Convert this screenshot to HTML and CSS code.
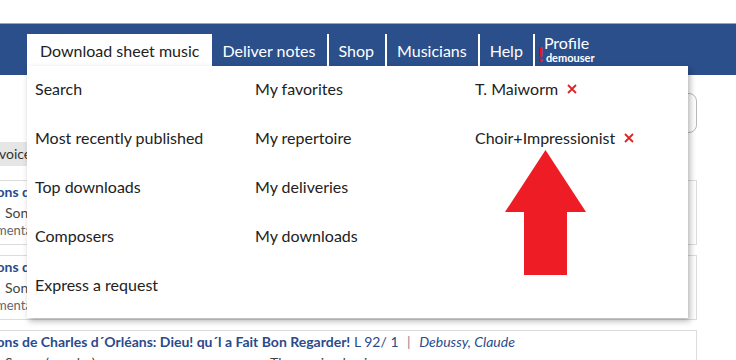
FILE: index.html
```html
<!DOCTYPE html>
<html lang="en">
<head>
<meta charset="utf-8">
<title>Download sheet music</title>
<link rel="stylesheet" href="styles.css">
</head>
<body>
<div class="topspace"></div>
<header class="nav">
  <ul class="tabs">
    <li class="tab active">Download sheet music</li>
    <li class="tab">Deliver notes</li>
    <li class="tab">Shop</li>
    <li class="tab">Musicians</li>
    <li class="tab">Help</li>
    <li class="tab profile"><span class="alert">!</span><span class="pstack"><span class="pname">Profile</span><span class="puser">demouser</span></span></li>
  </ul>
</header>
<main class="content">
  <div class="toolbar">
    <div class="select">
      <span>Relevance</span>
      <svg class="chev" width="12" height="8" viewBox="0 0 12 8"><path d="M1 1 L6 6 L11 1" fill="none" stroke="#444" stroke-width="1.6"/></svg>
    </div>
  </div>
  <div class="filters"><span class="chip">Solo voice</span></div>
  <div class="card">
    <div class="title"><b>Trois Chansons de Charles d´Orléans: Quant j´ai ouy le tabourin</b></div>
    <div class="meta"><span class="genre">Songs (secular)</span><span>Three mixed voices</span></div>
    <div class="instr">Instrumentation: SATB</div>
  </div>
  <div class="card">
    <div class="title"><b>Trois Chansons de Charles d´Orléans: Yver, vous n´estes qu´un villain</b></div>
    <div class="meta"><span class="genre">Songs (secular)</span><span>Three mixed voices</span></div>
    <div class="instr">Instrumentation: SATB</div>
  </div>
  <div class="card">
    <div class="title"><b>Trois Chansons de Charles d´Orléans: Dieu! qu´l a Fait Bon Regarder!</b> L 92/ 1 <span class="sep">|</span> <i>Debussy, Claude</i></div>
    <div class="meta"><span class="genre">Songs (secular)</span><span>Three mixed voices</span></div>
    <div class="instr">Instrumentation: SATB</div>
  </div>
</main>

<div class="dropdown">
  <ul class="col">
    <li>Search</li>
    <li>Most recently published</li>
    <li>Top downloads</li>
    <li>Composers</li>
    <li>Express a request</li>
  </ul>
  <ul class="col">
    <li>My favorites</li>
    <li>My repertoire</li>
    <li>My deliveries</li>
    <li>My downloads</li>
  </ul>
  <ul class="col last">
    <li>T. Maiworm <svg class="x" width="10" height="10" viewBox="0 0 10 10"><path d="M1 1 L9 9 M9 1 L1 9" stroke="#e02424" stroke-width="1.8"/></svg></li>
    <li>Choir+Impressionist <svg class="x" width="10" height="10" viewBox="0 0 10 10"><path d="M1 1 L9 9 M9 1 L1 9" stroke="#e02424" stroke-width="1.8"/></svg></li>
  </ul>
</div>

<svg class="arrow" width="82" height="126" viewBox="0 0 82 126"><polygon points="40.5,0 81,62 62,62 62,125 19,125 19,62 0,62" fill="#ee1d25"/></svg>
</body>
</html>
```

FILE: styles.css
```css
* { box-sizing: border-box; }
html, body { margin: 0; padding: 0; }
body {
  width: 736px;
  height: 360px;
  overflow: hidden;
  position: relative;
  background: #fff;
  font-family: Lato, "Open Sans", sans-serif;
  color: #222;
}
ul { list-style: none; margin: 0; padding: 0; }

.topspace { height: 23px; background: #fff; }

.nav {
  height: 52px;
  border-top: 1px solid #a3a3a3;
  background: #2b4f8b;
  padding: 10px 0 0 27px;
}
.tabs { display: flex; height: 41px; }
.tab {
  color: #fff;
  font-size: 16px;
  padding: 7px 11px 0 10px;
  border-right: 2px solid #fff;
  height: 41px;
  white-space: nowrap;
}
.tab:nth-child(5) { padding-right: 10px; }
.tab.active {
  background: #fff;
  color: #222;
  padding: 7px 13px 0 13px;
  border-right: none;
}
.tab.profile {
  border-right: none;
  padding: 0 0 0 3px;
  display: flex;
  align-items: flex-start;
}
.alert {
  color: #e8141c;
  font-weight: 900;
  font-size: 20px;
  line-height: 20px;
  margin-top: 10px;
  width: 6px;
}
.pstack { display: flex; flex-direction: column; padding-top: 1px; }
.pname { font-size: 16px; line-height: 16px; }
.puser { font-size: 11px; font-weight: bold; line-height: 14px; padding-left: 2px; }

.content {
  margin-left: -84px;
  width: 781px;
}
.toolbar {
  display: flex;
  justify-content: flex-end;
  padding-top: 18px;
}
.select {
  width: 200px;
  height: 40px;
  border: 1px solid #b9b9b9;
  border-radius: 8px;
  display: flex;
  align-items: center;
  justify-content: space-between;
  padding: 0 8px 0 12px;
  font-size: 14px;
  color: #333;
}
.filters {
  margin-top: 9px;
  height: 24px;
  display: flex;
}
.chip {
  background: #e6e6e6;
  font-size: 14px;
  line-height: 24px;
  color: #333;
  padding: 0 12px 0 53px;
}
.card {
  margin-top: 14px;
  height: 65px;
  border: 1px solid #dcdcdc;
  padding: 2px 8px 0;
  font-size: 14px;
  white-space: nowrap;
  overflow: hidden;
}
.card + .card { margin-top: 10px; }
.title { line-height: 18px; color: #2a4b8d; }
.title b { font-weight: bold; }
.title .sep { color: #888; margin: 0 5px; }
.title i { color: #2a4b8d; }
.meta {
  display: flex;
  margin-top: 3px;
  line-height: 18px;
  color: #444;
  padding-left: 80px;
}
.genre { width: 265px; }
.instr {
  font-size: 13px;
  line-height: 16px;
  color: #666;
  padding-left: 38px;
}

.dropdown {
  position: absolute;
  left: 27px;
  top: 66px;
  width: 661px;
  height: 252px;
  background: #fff;
  box-shadow: 2px 3px 6px rgba(0,0,0,0.3);
  display: flex;
  padding-left: 8px;
}
.col { width: 220px; flex-shrink: 0; }
.col.last { flex: 1; width: auto; }
.col li {
  height: 49px;
  padding-bottom: 4px;
  display: flex;
  align-items: center;
  font-size: 16px;
  color: #222;
  white-space: nowrap;
}
.x { margin-left: 9px; margin-top: 1px; }

.arrow {
  position: absolute;
  left: 505px;
  top: 150px;
}
```
